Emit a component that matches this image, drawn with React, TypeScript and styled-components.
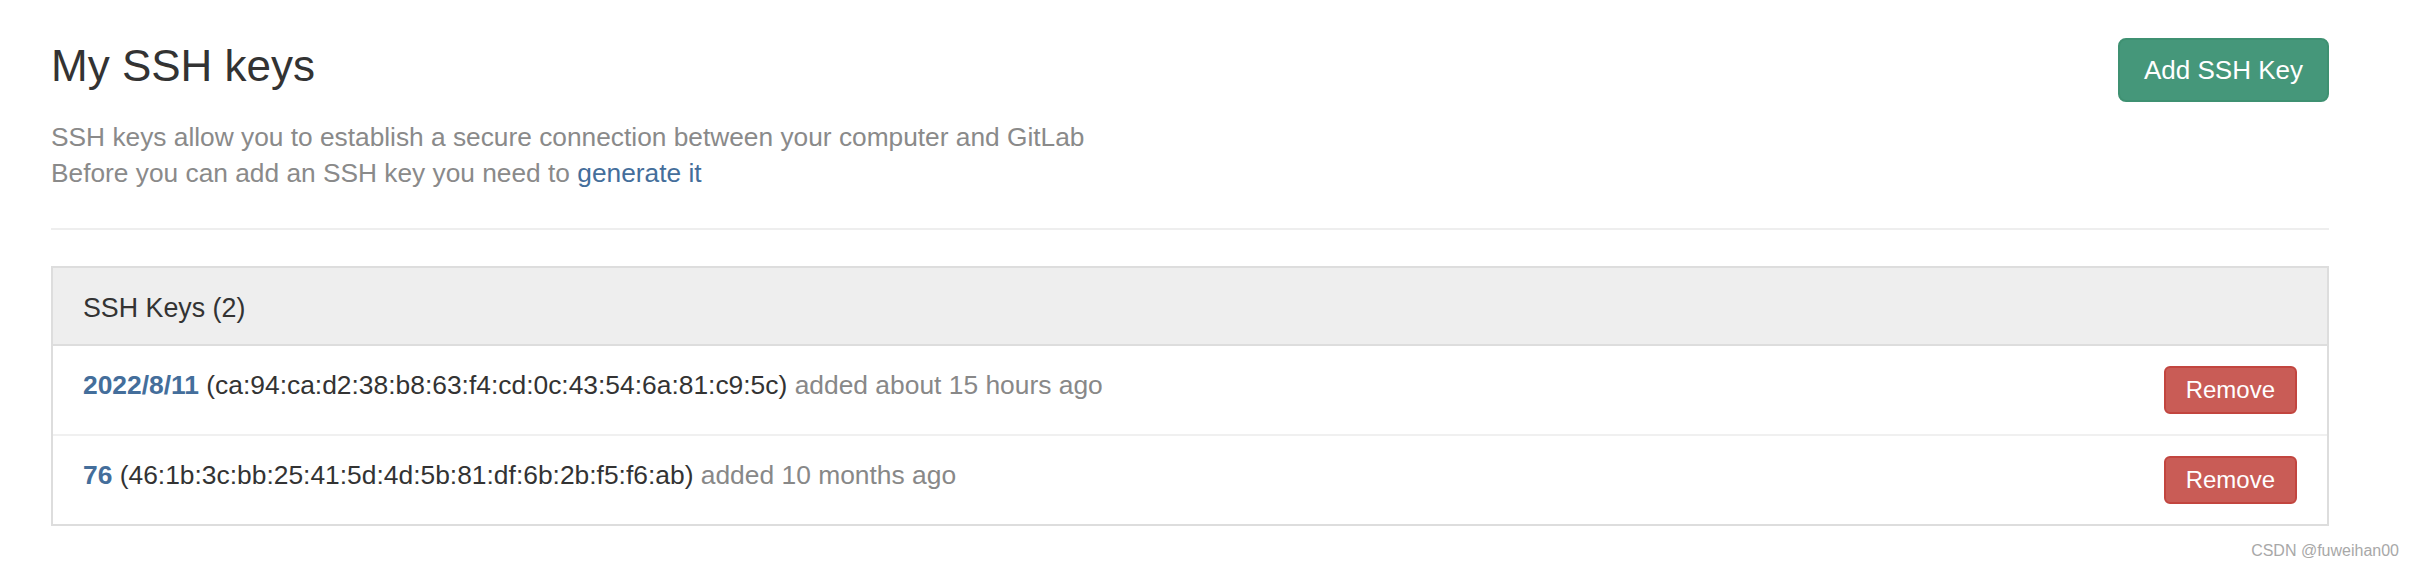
import { createGlobalStyle, styled } from 'styled-components';

interface SshKey {
  title: string;
  fingerprint: string;
  added: string;
}

const keys: SshKey[] = [
  {
    title: '2022/8/11',
    fingerprint: 'ca:94:ca:d2:38:b8:63:f4:cd:0c:43:54:6a:81:c9:5c',
    added: 'about 15 hours ago',
  },
  {
    title: '76',
    fingerprint: '46:1b:3c:bb:25:41:5d:4d:5b:81:df:6b:2b:f5:f6:ab',
    added: '10 months ago',
  },
];

const GlobalStyle = createGlobalStyle`
  body {
    margin: 0;
    background: #fff;
    font-family: "Liberation Sans", Arial, Helvetica, sans-serif;
    color: #333;
  }
`;

const App = () => {
  return (
    <Page>
      <GlobalStyle />
      <Top>
        <Intro>
          <Title>My SSH keys</Title>
          <Lead>
            SSH keys allow you to establish a secure connection between your
            computer and GitLab
            <br />
            Before you can add an SSH key you need to{' '}
            <Link href="#">generate it</Link>
          </Lead>
        </Intro>
        <AddButton>Add SSH Key</AddButton>
      </Top>
      <Divider />
      <Panel>
        <PanelHeading>SSH Keys ({keys.length})</PanelHeading>
        {keys.map((key) => (
          <KeyRow key={key.title}>
            <KeyInfo>
              <KeyTitle href="#">{key.title}</KeyTitle> ({key.fingerprint}){' '}
              <Muted>added {key.added}</Muted>
            </KeyInfo>
            <RemoveButton>Remove</RemoveButton>
          </KeyRow>
        ))}
      </Panel>
      <Watermark>CSDN @fuweihan00</Watermark>
    </Page>
  );
};

const Page = styled.div`
  position: relative;
  box-sizing: border-box;
  min-height: 566px;
  padding: 38px 85px 0 51px;
`;

const Top = styled.div`
  display: flex;
  justify-content: space-between;
  align-items: flex-start;
`;

const Intro = styled.div`
  display: flex;
  flex-direction: column;
`;

const Title = styled.h3`
  margin: 4px 0 29px;
  font-size: 44px;
  font-weight: normal;
  line-height: 48px;
  color: #333;
`;

const Lead = styled.p`
  margin: 0;
  font-size: 26.3px;
  line-height: 36px;
  color: #8a8a8a;
`;

const Link = styled.a`
  color: #446e9b;
  text-decoration: none;
`;

const AddButton = styled.button`
  box-sizing: border-box;
  height: 64px;
  padding: 0 24px;
  border: 2px solid #3f9172;
  border-radius: 8px;
  background: #45977a;
  color: #fff;
  font-family: inherit;
  font-size: 26px;
`;

const Divider = styled.hr`
  margin: 37px 0 36px;
  border: 0;
  border-top: 2px solid #eee;
`;

const Panel = styled.div`
  border: 2px solid #ddd;
`;

const PanelHeading = styled.div`
  height: 78px;
  box-sizing: border-box;
  padding: 22px 30px 0;
  border-bottom: 2px solid #ddd;
  background: #eee;
  font-size: 26.8px;
  line-height: 36px;
  color: #333;
`;

const KeyRow = styled.div`
  display: flex;
  align-items: center;
  justify-content: space-between;
  height: 88px;
  padding: 0 30px 0 30px;

  & + & {
    border-top: 2px solid #f0f0f0;
  }
`;

const KeyInfo = styled.div`
  margin-bottom: 10px;
  font-size: 26.4px;
  line-height: 36px;
  color: #333;
`;

const KeyTitle = styled.a`
  color: #446e9b;
  font-weight: bold;
  text-decoration: none;
`;

const Muted = styled.span`
  color: #888;
`;

const RemoveButton = styled.button`
  box-sizing: border-box;
  height: 48px;
  padding: 0 20px;
  border: 2px solid #c2453f;
  border-radius: 6px;
  background: #c95c56;
  color: #fff;
  font-family: inherit;
  font-size: 24px;
`;

const Watermark = styled.div`
  position: absolute;
  right: 15px;
  bottom: 6px;
  font-size: 16px;
  line-height: 18px;
  color: #a8a8a8;
`;

export default App;
